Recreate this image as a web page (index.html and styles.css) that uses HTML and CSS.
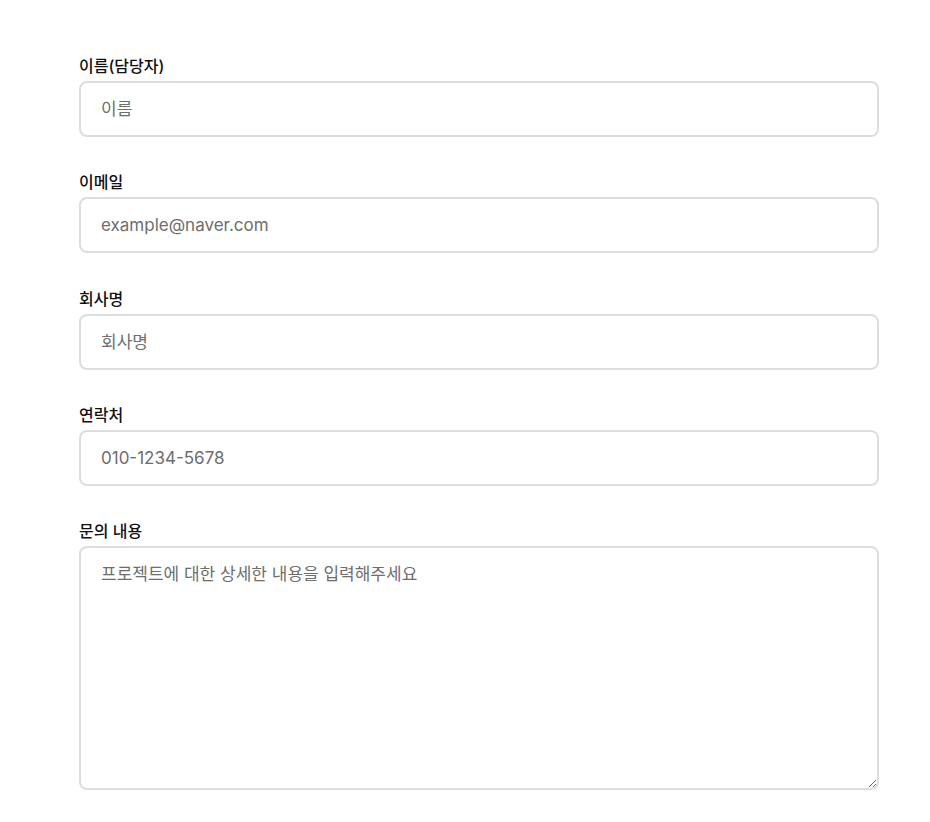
FILE: index.html
```html
<!DOCTYPE html>
<html lang="ko">
<head>
<meta charset="utf-8">
<title>문의</title>
<link rel="stylesheet" href="styles.css">
</head>
<body>
<form class="form">
  <div class="field">
    <label class="label" for="name">이름(담당자)</label>
    <input class="input" id="name" type="text" placeholder="이름">
  </div>
  <div class="field">
    <label class="label" for="email">이메일</label>
    <input class="input" id="email" type="email" placeholder="example@naver.com">
  </div>
  <div class="field">
    <label class="label" for="company">회사명</label>
    <input class="input" id="company" type="text" placeholder="회사명">
  </div>
  <div class="field">
    <label class="label" for="phone">연락처</label>
    <input class="input" id="phone" type="tel" placeholder="010-1234-5678">
  </div>
  <div class="field">
    <label class="label" for="msg">문의 내용</label>
    <textarea class="input textarea" id="msg" placeholder="프로젝트에 대한 상세한 내용을 입력해주세요"></textarea>
  </div>
</form>
</body>
</html>
```

FILE: styles.css
```css
html, body {
  margin: 0;
  padding: 0;
  background: #ffffff;
}
body {
  font-family: Inter, "Noto Sans CJK KR", sans-serif;
  color: #111;
}
.form {
  width: 800px;
  padding: 56px 0 0 79px;
  display: flex;
  flex-direction: column;
  gap: 35.25px;
}
.field {
  display: flex;
  flex-direction: column;
  gap: 5px;
}
.label {
  font-size: 16px;
  font-weight: 500;
  line-height: 20px;
  color: #111;
}
.input {
  box-sizing: border-box;
  width: 800px;
  height: 56px;
  border: 2px solid #dddddd;
  border-radius: 8px;
  padding: 0 20px;
  font-family: Inter, "Noto Sans CJK KR", sans-serif;
  font-size: 17px;
  color: #333;
  background: #fff;
  outline: none;
}
.input::placeholder {
  color: #6e6e6e;
}
.textarea {
  height: 244px;
  padding: 14px 20px;
  line-height: 24px;
  resize: vertical;
}
```
